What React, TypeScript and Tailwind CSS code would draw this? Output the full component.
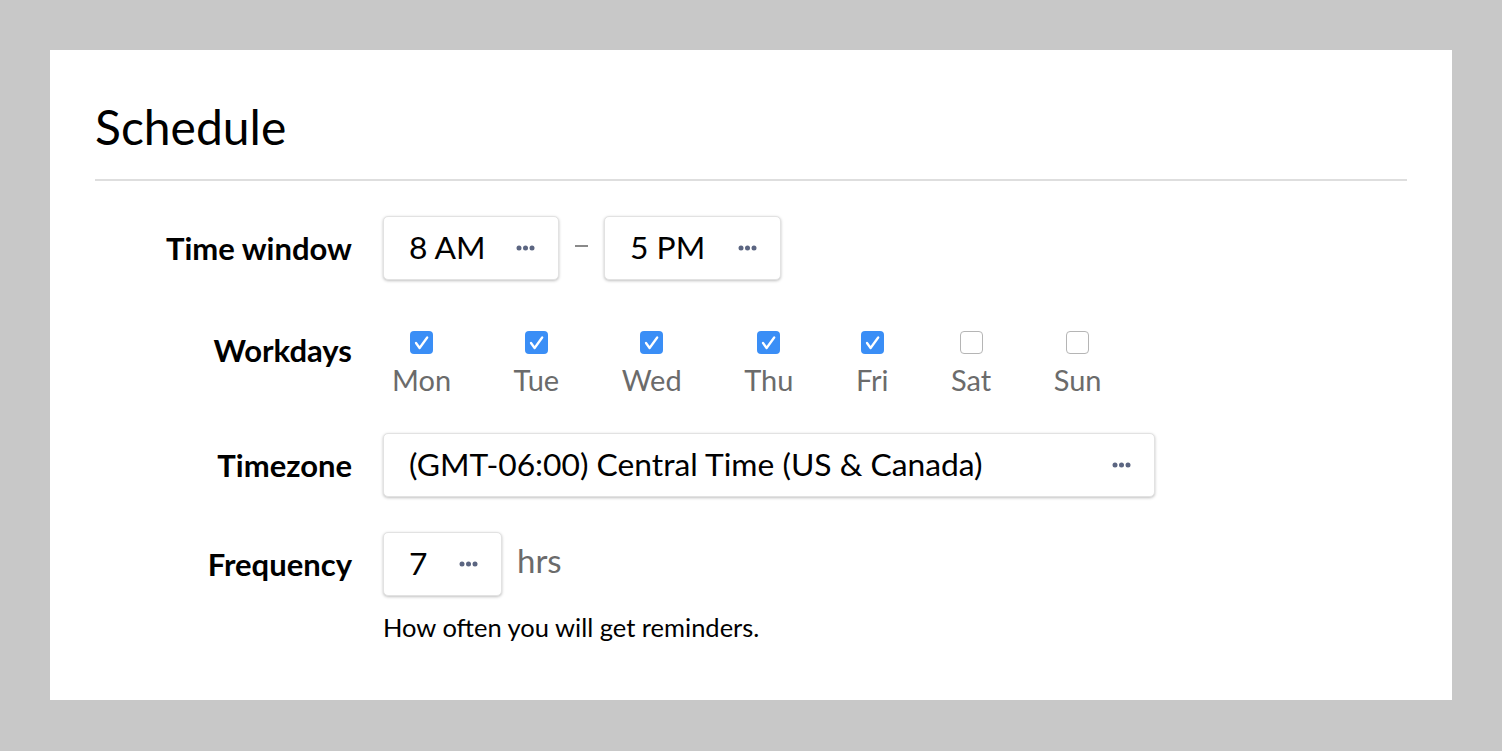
const days = [
  { name: "Mon", on: true },
  { name: "Tue", on: true },
  { name: "Wed", on: true },
  { name: "Thu", on: true },
  { name: "Fri", on: true },
  { name: "Sat", on: false },
  { name: "Sun", on: false },
];

function Dots() {
  return (
    <svg width="19" height="6" viewBox="0 0 19 6" className="shrink-0">
      <circle cx="3" cy="3" r="2.5" fill="#5b6581" />
      <circle cx="9.5" cy="3" r="2.5" fill="#5b6581" />
      <circle cx="16" cy="3" r="2.5" fill="#5b6581" />
    </svg>
  );
}

function Picker({ value, width }: { value: string; width: string }) {
  return (
    <div
      className={`${width} h-[64px] flex items-center justify-between pl-[25px] pr-[23px] bg-white rounded-[5px] border border-[#e2e2e2] shadow-[0_1px_3px_rgba(0,0,0,0.25)] text-[31.8px] text-black`}
    >
      <span className="whitespace-nowrap">{value}</span>
      <Dots />
    </div>
  );
}

function Check({ on }: { on: boolean }) {
  if (on) {
    return (
      <div className="w-[23px] h-[23px] rounded-[4px] bg-[#3a8ef6]">
        <svg width="23" height="23" viewBox="0 0 23 23">
          <path d="M6 12 L9.6 17 L17.2 6.5" stroke="white" strokeWidth="2.3" fill="none" strokeLinecap="round" strokeLinejoin="round" />
        </svg>
      </div>
    );
  }
  return <div className="w-[23px] h-[23px] rounded-[4px] bg-white border border-[#b5b5b5]" />;
}

function Label({ text, extra = "" }: { text: string; extra?: string }) {
  return (
    <div className={`w-[288px] shrink-0 text-right pr-[31px] text-[31px] leading-[31px] font-bold text-black ${extra}`}>
      {text}
    </div>
  );
}

export default function App() {
  return (
    <div className="min-h-screen bg-[#c8c8c8] p-[50px]" style={{ fontFamily: "Lato, 'Noto Sans', sans-serif" }}>
      <div className="bg-white h-[650px] px-[45px] pt-[53px]">
        <h1 className="text-[48px] text-black leading-[48px] pb-[28px]">Schedule</h1>
        <div className="h-[2px] bg-[#dedede]" />

        <div className="mt-[35px] flex flex-col">
          <div className="flex items-center">
            <Label text="Time window" />
            <div className="flex items-center">
              <Picker value="8 AM" width="w-[176px]" />
              <div className="w-[45px] flex justify-center -mt-[4px]">
                <div className="w-[13px] h-[2px] bg-[#8a8a8a]" />
              </div>
              <Picker value="5 PM" width="w-[177px]" />
            </div>
          </div>

          <div className="mt-[51px] flex items-start">
            <Label text="Workdays" extra="mt-[4px]" />
            <div className="flex gap-[62.5px] pl-[9px]">
              {days.map((d) => (
                <div key={d.name} className="flex flex-col items-center">
                  <Check on={d.on} />
                  <span className="text-[29px] text-[#6b6b6b] leading-[29px] mt-[11px]">{d.name}</span>
                </div>
              ))}
            </div>
          </div>

          <div className="mt-[39px] flex items-center">
            <Label text="Timezone" />
            <Picker value="(GMT-06:00) Central Time (US & Canada)" width="w-[772px]" />
          </div>

          <div className="mt-[35px] flex items-center">
            <Label text="Frequency" />
            <Picker value="7" width="w-[119px]" />
            <span className="ml-[15px] text-[33px] text-[#6b6b6b] -mt-[6px]">hrs</span>
          </div>

          <div className="pl-[288px] mt-[18px] text-[25.5px] leading-[26px] text-black">How often you will get reminders.</div>
        </div>
      </div>
    </div>
  );
}
